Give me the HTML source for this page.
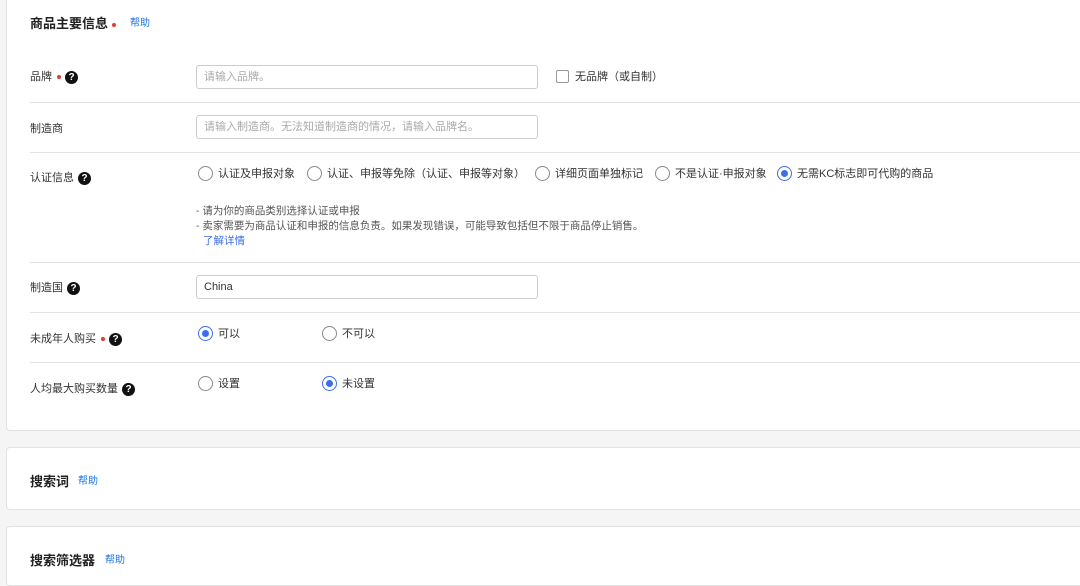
<!DOCTYPE html>
<html><head><meta charset="utf-8"><style>
*{margin:0;padding:0;box-sizing:border-box}
body{width:1080px;height:574px;overflow:hidden;background:#f5f5f5;font-family:"Liberation Sans","Noto Sans CJK SC",sans-serif;color:#333;position:relative}
.card{position:absolute;left:6px;right:-10px;background:#fff;border:1px solid #e2e2e2;border-radius:4px}
.a{position:absolute;white-space:nowrap}
.t{font-size:13px;font-weight:bold;color:#222}
.help{font-size:10px;color:#1a73e8}
.lbl{font-size:11px;color:#333}
.hr{position:absolute;left:30px;right:0;height:1px;background:#e3e3e3}
.inp{position:absolute;left:196px;width:342px;height:24px;border:1px solid #ccc;border-radius:3px;font-size:11px;color:#aaa;padding:0 7px;line-height:22px}
.q{display:inline-block;width:13px;height:13px;border-radius:50%;background:#111;color:#fff;font-size:10px;font-weight:bold;text-align:center;line-height:13px;vertical-align:middle;margin-left:4px}
.dot{display:inline-block;width:4px;height:4px;border-radius:50%;background:#e53935;vertical-align:middle;margin-left:5px}
.r{position:absolute;width:15px;height:15px;border:1.5px solid #888;border-radius:50%}
.r.on{border-color:#3b6fe8}
.r.on::after{content:"";position:absolute;left:2.5px;top:2.5px;width:7px;height:7px;border-radius:50%;background:#3b6fe8}
.rt{position:absolute;font-size:11px;color:#333;white-space:nowrap}
.note{font-size:10.5px;color:#555}
</style></head><body>
<div class="card" style="top:-10px;height:441px"></div>
<div class="card" style="top:447px;height:63px"></div>
<div class="card" style="top:526px;height:60px"></div>

<div class="a t" style="left:30px;top:13px">商品主要信息<span class="dot" style="margin-left:4px"></span></div>
<div class="a help" style="left:130px;top:14px">帮助</div>

<div class="a lbl" style="left:30px;top:68px">品牌<span class="dot"></span><span class="q">?</span></div>
<div class="inp" style="top:65px">请输入品牌。</div>
<div style="position:absolute;left:556px;top:70px;width:13px;height:13px;border:1.5px solid #999;border-radius:2px"></div>
<div class="rt" style="left:575px;top:68px">无品牌（或自制）</div>
<div class="hr" style="top:102px"></div>

<div class="a lbl" style="left:30px;top:120px">制造商</div>
<div class="inp" style="top:115px">请输入制造商。无法知道制造商的情况，请输入品牌名。</div>
<div class="hr" style="top:152px"></div>

<div class="a lbl" style="left:30px;top:169px">认证信息<span class="q">?</span></div>
<div class="r" style="left:198px;top:166px"></div><div class="rt" style="left:218px;top:165px">认证及申报对象</div>
<div class="r" style="left:307px;top:166px"></div><div class="rt" style="left:327px;top:165px">认证、申报等免除（认证、申报等对象）</div>
<div class="r" style="left:535px;top:166px"></div><div class="rt" style="left:555px;top:165px">详细页面单独标记</div>
<div class="r" style="left:655px;top:166px"></div><div class="rt" style="left:675px;top:165px">不是认证·申报对象</div>
<div class="r on" style="left:777px;top:166px"></div><div class="rt" style="left:797px;top:165px">无需KC标志即可代购的商品</div>
<div class="a note" style="left:196px;top:203px">- 请为你的商品类别选择认证或申报</div>
<div class="a note" style="left:196px;top:218px">- 卖家需要为商品认证和申报的信息负责。如果发现错误，可能导致包括但不限于商品停止销售。</div>
<div class="a note" style="left:203px;top:233px;color:#3b6fe8">了解详情</div>
<div class="hr" style="top:262px"></div>

<div class="a lbl" style="left:30px;top:279px">制造国<span class="q">?</span></div>
<div class="inp" style="top:275px;color:#333">China</div>
<div class="hr" style="top:312px"></div>

<div class="a lbl" style="left:30px;top:330px">未成年人购买<span class="dot"></span><span class="q">?</span></div>
<div class="r on" style="left:198px;top:326px"></div><div class="rt" style="left:218px;top:325px">可以</div>
<div class="r" style="left:322px;top:326px"></div><div class="rt" style="left:342px;top:325px">不可以</div>
<div class="hr" style="top:362px"></div>

<div class="a lbl" style="left:30px;top:380px">人均最大购买数量<span class="q">?</span></div>
<div class="r" style="left:198px;top:376px"></div><div class="rt" style="left:218px;top:375px">设置</div>
<div class="r on" style="left:322px;top:376px"></div><div class="rt" style="left:342px;top:375px">未设置</div>

<div class="a t" style="left:30px;top:471px">搜索词</div>
<div class="a help" style="left:78px;top:472px">帮助</div>
<div class="a t" style="left:30px;top:550px">搜索筛选器</div>
<div class="a help" style="left:105px;top:551px">帮助</div>
</body></html>
